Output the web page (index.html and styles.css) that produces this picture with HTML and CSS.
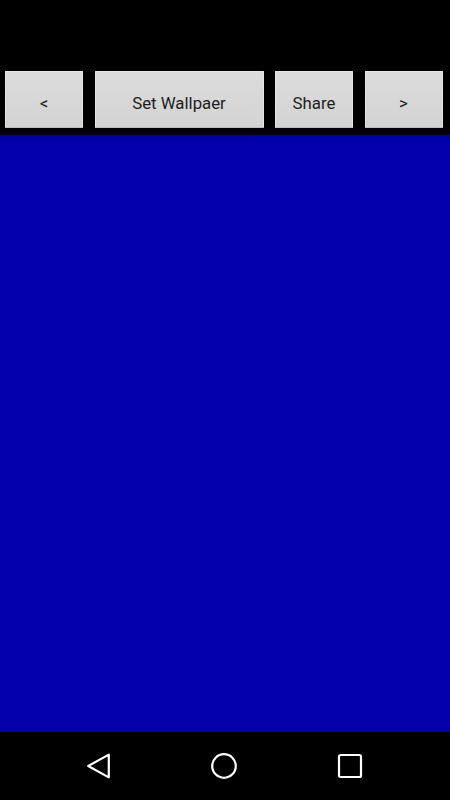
FILE: index.html
```html
<!DOCTYPE html>
<html>
<head>
<meta charset="utf-8">
<link rel="stylesheet" href="styles.css">
</head>
<body>
<div class="screen">
  <div class="toolbar">
    <button class="btn btn-small">&lt;</button>
    <button class="btn btn-wide">Set Wallpaer</button>
    <button class="btn btn-small">Share</button>
    <button class="btn btn-small">&gt;</button>
  </div>
  <div class="wallpaper"></div>
  <div class="navbar">
    <svg class="nav-icon nav-back" width="26" height="30" viewBox="0 0 26 30">
      <path d="M2.2 15 L22.8 3.6 L22.8 26.4 Z" fill="none" stroke="#fff" stroke-width="2.2" stroke-linejoin="round"/>
    </svg>
    <svg class="nav-icon nav-home" width="28" height="28" viewBox="0 0 28 28">
      <circle cx="14" cy="14" r="11.8" fill="none" stroke="#fff" stroke-width="2.2"/>
    </svg>
    <svg class="nav-icon nav-recent" width="26" height="26" viewBox="0 0 26 26">
      <rect x="2" y="2" width="22" height="22" rx="1.5" fill="none" stroke="#fff" stroke-width="2.2"/>
    </svg>
  </div>
</div>
</body>
</html>
```
FILE: styles.css
```css
html, body {
  margin: 0;
  padding: 0;
  background: #000;
}
.screen {
  width: 450px;
  height: 800px;
  display: flex;
  flex-direction: column;
  background: #000;
}
.toolbar {
  height: 135px;
  box-sizing: border-box;
  padding: 71px 0 0 5px;
  display: flex;
  align-items: flex-start;
  gap: 11.5px;
  background: linear-gradient(to bottom, #000 0, #000 129px, #00001c 135px);
}
.btn {
  height: 57px;
  margin: 0;
  padding: 8px 0 0 0;
  border: 1px solid #e6e6e6;
  border-bottom-color: #bdbdbd;
  border-radius: 1px;
  background: linear-gradient(to bottom, #dcdcdc, #d3d3d3);
  color: #1c1c1c;
  font-family: Roboto, "Liberation Sans", sans-serif;
  font-size: 16.8px;
  line-height: 1;
  box-sizing: border-box;
  display: flex;
  align-items: center;
  justify-content: center;
}
.btn-small {
  width: 78px;
}
.btn-wide {
  width: 169px;
}
.wallpaper {
  flex: 1;
  background: linear-gradient(to bottom, #000090 0, #0000aa 3px, #0000aa 100%);
}
.navbar {
  height: 68px;
  box-sizing: border-box;
  padding-left: 86px;
  display: flex;
  align-items: center;
  background: #000;
}
.nav-icon {
  display: block;
  flex: none;
}
.nav-back {
  margin-right: 98px;
}
.nav-home {
  margin-right: 99px;
}
```
